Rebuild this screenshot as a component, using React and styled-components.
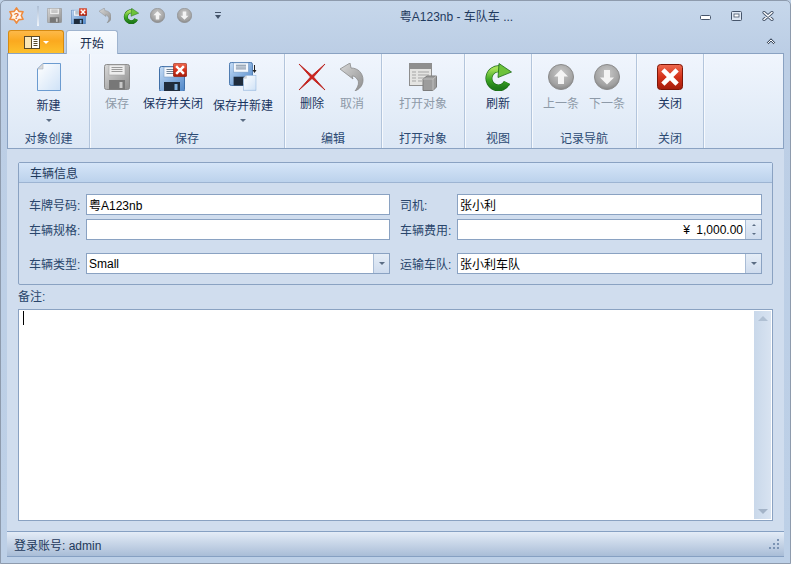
import React from 'react';
import styled, { createGlobalStyle } from 'styled-components';

const GlobalStyle = createGlobalStyle`
  html, body {
    margin: 0;
    padding: 0;
    background: #bfd1e6;
  }
  * {
    box-sizing: border-box;
  }
`;

const Window = styled.div`
  width: 791px;
  height: 564px;
  display: flex;
  flex-direction: column;
  overflow: hidden;
  background: linear-gradient(180deg, #c6d7eb 0%, #bccee5 50px, #bdd0e7 100%);
  border: 1px solid #8e9bad;
  border-radius: 5px 5px 0 0;
  color: #1e395b;
  font-family: "Liberation Sans", "Noto Sans CJK SC", sans-serif;
  font-size: 12px;
`;

const TitleBar = styled.div`
  height: 29px;
  flex: none;
  display: flex;
  align-items: center;
  padding: 0 16px 0 6px;
`;

const Qat = styled.div`
  display: flex;
  align-items: center;
`;

const QatSlot = styled.div`
  width: ${props => props.$w || 26}px;
  height: 18px;
  display: flex;
  align-items: center;
  justify-content: center;
`;

const QatSep = styled.div`
  width: 2px;
  height: 20px;
  margin: 0 3px 0 12px;
  background: linear-gradient(180deg, #aebfd5, #f0f5fb);
`;

const Title = styled.div`
  flex: 1;
  text-align: center;
  padding-right: 26px;
  font-size: 12px;
  color: #1f3a5e;
`;

const WinButtons = styled.div`
  display: flex;
  align-items: center;
  gap: 20px;
`;

const TabRow = styled.div`
  height: 23px;
  flex: none;
  display: flex;
  align-items: flex-end;
  padding: 0 14px 0 7px;
`;

const AppButton = styled.div`
  width: 56px;
  height: 23px;
  display: flex;
  align-items: center;
  justify-content: center;
  gap: 3px;
  background: linear-gradient(180deg, #fdb94a 0%, #fba91f 45%, #fdc02c 100%);
  border: 1px solid #d58a12;
  border-bottom: none;
  border-radius: 3px 3px 0 0;
`;

const Tab = styled.div`
  width: 52px;
  height: 24px;
  margin: 0 0 -1px 2px;
  position: relative;
  z-index: 1;
  display: flex;
  align-items: center;
  justify-content: center;
  background: linear-gradient(180deg, #f8fbfe, #eef4fc);
  border: 1px solid #9fb4cf;
  border-bottom: none;
  border-radius: 3px 3px 0 0;
  color: #15294a;
`;

const Collapse = styled.div`
  margin-left: auto;
  height: 23px;
  display: flex;
  align-items: center;
`;

const Ribbon = styled.div`
  height: 96px;
  flex: none;
  margin: 0 6px;
  display: flex;
  background: linear-gradient(180deg, #f0f5fd 0%, #e4edf8 60%, #dce7f5 100%);
  border: 1px solid #8aa2c2;
`;

const Group = styled.div`
  width: ${props => props.$w}px;
  flex: none;
  display: flex;
  flex-direction: column;
  border-right: 1px solid #b3c5dc;
  box-shadow: 1px 0 0 #f6f9fd;
`;

const GroupButtons = styled.div`
  flex: 1;
  display: flex;
  justify-content: ${props => props.$align || 'center'};
  padding-left: ${props => props.$pad || 0}px;
  gap: ${props => props.$gap || 0}px;
`;

const GroupLabel = styled.div`
  height: 21px;
  display: flex;
  align-items: center;
  justify-content: center;
  color: #2c4a73;
  font-size: 12px;
`;

const BigButton = styled.div`
  width: ${props => props.$w}px;
  flex: none;
  display: flex;
  flex-direction: column;
  align-items: center;
  padding-top: 8px;
  color: ${props => props.$off ? '#8e9aa8' : '#1a3560'};
  white-space: nowrap;
`;

const BigIcon = styled.div`
  height: 29px;
  display: flex;
  align-items: center;
  justify-content: center;
`;

const BigText = styled.div`
  margin-top: ${props => props.$drop ? 7 : 5}px;
  line-height: 16px;
`;

const DropMark = styled.div`
  margin-top: 5px;
  width: 0;
  height: 0;
  border: 3px solid transparent;
  border-top: 3px solid #5b6d84;
  border-bottom: none;
`;

const Body = styled.div`
  flex: 1;
  min-height: 0;
  margin: 0 6px;
  display: flex;
  flex-direction: column;
  padding: 13px 11px 10px 11px;
  background: #d0ddee;
`;

const GroupBox = styled.div`
  height: 123px;
  flex: none;
  border: 1px solid #8aa2c2;
  border-radius: 2px;
`;

const BoxHeader = styled.div`
  height: 20px;
  display: flex;
  align-items: center;
  padding-left: 11px;
  background: linear-gradient(180deg, #d5e5f8, #bcd2ec);
  border-bottom: 1px solid #9db4d2;
  color: #1e395b;
`;

const BoxBody = styled.div`
  padding: 11px 10px 0;
`;

const FieldRow = styled.div`
  display: grid;
  grid-template-columns: 57px 304px 10px 57px 305px;
  height: 21px;
  margin-top: ${props => props.$top || 0}px;
`;

const FieldLabel = styled.div`
  display: flex;
  align-items: center;
  white-space: nowrap;
  color: #29456b;
  grid-column: ${props => props.$col};
`;

const Input = styled.div`
  display: flex;
  align-items: stretch;
  grid-column: ${props => props.$col};
  background: #fff;
  border: 1px solid #8aa2c2;
  color: #000;
`;

const InputText = styled.div`
  flex: 1;
  display: flex;
  align-items: center;
  justify-content: ${props => props.$right ? 'flex-end' : 'flex-start'};
  padding: 0 2px;
  word-spacing: ${props => props.$right ? 3 : 0}px;
`;

const SideButton = styled.div`
  width: 16px;
  flex: none;
  display: flex;
  flex-direction: column;
  align-items: center;
  justify-content: center;
  gap: 7px;
  background: linear-gradient(180deg, #e5edf7, #cfdcee);
  border-left: 1px solid #a9bcd5;
`;

const Caret = styled.div`
  width: 0;
  height: 0;
  border: ${props => props.$size || 4}px solid transparent;
  ${props => props.$up
    ? `border-bottom: ${props.$size || 4}px solid ${props.$color || '#5b6d84'}; border-top: none;`
    : `border-top: ${props.$size || 4}px solid ${props.$color || '#5b6d84'}; border-bottom: none;`}
`;

const MemoLabel = styled.div`
  height: 20px;
  margin-bottom: 4px;
  display: flex;
  align-items: center;
  color: #29456b;
`;

const Memo = styled.div`
  flex: 1;
  min-height: 0;
  display: flex;
  background: #fff;
  border: 1px solid #8aa2c2;
`;

const MemoText = styled.div`
  flex: 1;
  padding: 1px 4px;
`;

const TextCursor = styled.div`
  width: 1px;
  height: 14px;
  background: #000;
`;

const ScrollBar = styled.div`
  width: 17px;
  flex: none;
  margin: 1px 1px 1px 0;
  display: flex;
  flex-direction: column;
  align-items: center;
  justify-content: space-between;
  padding: 5px 0;
  background: linear-gradient(90deg, #c9d8ea, #d8e3f1);
`;

const StatusBar = styled.div`
  height: 26px;
  flex: none;
  margin: 0 6px;
  display: flex;
  align-items: center;
  justify-content: space-between;
  padding: 0 4px 0 7px;
  background: linear-gradient(180deg, #e4ecf7 0%, #ccd9ea 40%, #a9bdd7 100%);
  border-top: 1px solid #86a0c2;
  border-bottom: 1px solid #86a0c2;
  color: #1e395b;
`;

const BottomFrame = styled.div`
  height: 6px;
  flex: none;
`;

const MinSvg = styled.svg`
  margin-top: 4px;
`;

// ---- icons ----

const Floppy = ({ size = 26, blue }) => {
  const id = blue ? 'fb' : 'fg';
  return (
    <svg width={size} height={size} viewBox="0 0 26 26">
      <defs>
        <linearGradient id={id} x1="0" y1="0" x2="1" y2="1">
          <stop offset="0" stopColor={blue ? '#c4dcf6' : '#d8d8d8'} />
          <stop offset="1" stopColor={blue ? '#4e86c8' : '#8e8e8e'} />
        </linearGradient>
      </defs>
      <rect x=".5" y=".5" width="25" height="25" rx="2" fill={`url(#${id})`} stroke={blue ? '#3f6fa8' : '#8b8b8b'} />
      <rect x="5" y="1" width="16" height="10" fill={blue ? '#f4f8fd' : '#ededed'} stroke={blue ? '#7a9cc4' : '#a5a5a5'} strokeWidth=".6" />
      <path d="M7.5 3.5h11M7.5 5.5h11M7.5 7.5h11" stroke={blue ? '#6f8296' : '#9a9a9a'} />
      <rect x="5" y="16" width="16" height="9.5" fill={blue ? '#1f2c3c' : '#777'} />
      <rect x="15.5" y="18" width="3" height="6" fill={blue ? '#7fb0e0' : '#c8c8c8'} />
    </svg>
  );
};

const RedX = ({ size = 26 }) => (
  <svg width={size} height={size} viewBox="0 0 26 26">
    <defs>
      <linearGradient id="rx" x1="0" y1="0" x2="0" y2="1">
        <stop offset="0" stopColor="#ef6a50" />
        <stop offset=".5" stopColor="#d5321a" />
        <stop offset="1" stopColor="#a31c0b" />
      </linearGradient>
    </defs>
    <rect x=".5" y=".5" width="25" height="25" rx="3" fill="url(#rx)" stroke="#7d1608" />
    <path d="M7.5 7.5l11 11M18.5 7.5l-11 11" stroke="#fff" strokeWidth="4.6" strokeLinecap="square" />
  </svg>
);

const FloppyClose = ({ size = 28 }) => (
  <svg width={size} height={size} viewBox="0 0 28 28">
    <g transform="translate(0 3)"><Floppy size={26} blue /></g>
    <g transform="translate(14 0) scale(.54)"><RedX /></g>
  </svg>
);

const NewDoc = ({ w = 24, h = 28 }) => (
  <svg width={w} height={h} viewBox="0 0 24 28">
    <defs>
      <linearGradient id="nd" x1="0" y1="0" x2="1" y2="1">
        <stop offset="0" stopColor="#ffffff" />
        <stop offset="1" stopColor="#cfe2f7" />
      </linearGradient>
    </defs>
    <path d="M6 .5H23.5V27.5H.5V6Z" fill="url(#nd)" stroke="#6b9bd0" />
    <path d="M6 .5V6H.5Z" fill="#d9d9d9" stroke="#a9b4c0" strokeWidth=".6" />
  </svg>
);

const FloppyNew = () => (
  <svg width="28" height="29" viewBox="0 0 28 29">
    <g transform="scale(.92)"><Floppy size={26} blue /></g>
    <g transform="translate(14 13) scale(.56)"><NewDoc /></g>
    <path d="M25.5 3v6" stroke="#222" strokeWidth="1" />
    <path d="M23.5 8h4l-2 3Z" fill="#222" />
  </svg>
);

const Undo = ({ size = 28, color = '#8f8f8f' }) => (
  <svg width={size * 24 / 28} height={size} viewBox="0 0 24 28">
    <defs>
      <linearGradient id="un" x1="0" y1="0" x2="1" y2="1">
        <stop offset="0" stopColor="#d8d8d8" />
        <stop offset="1" stopColor={color} />
      </linearGradient>
    </defs>
    <path d="M0 6 L10 0 L11 5 C18 5 23 10 23 17 C23 22 20 26 15 28 C18 24 20 19 17 16 C16 14 14 13 12 13 L13 16 Z" fill="url(#un)" stroke="#8a8a8a" strokeWidth=".8" />
  </svg>
);

const Refresh = ({ size = 28 }) => (
  <svg width={size} height={size} viewBox="0 0 28 28">
    <defs>
      <linearGradient id="rf" x1="0" y1="0" x2="0" y2="1">
        <stop offset="0" stopColor="#a5e05a" />
        <stop offset=".55" stopColor="#3fa824" />
        <stop offset="1" stopColor="#1e7a18" />
      </linearGradient>
    </defs>
    <path d="M23 19.500 A9.500 9.500 0 1 1 16 6" fill="none" stroke="#1c6a16" strokeWidth="7" />
    <path d="M23 19.500 A9.500 9.500 0 1 1 16 6" fill="none" stroke="url(#rf)" strokeWidth="5.600" />
    <path d="M15 0.500 L27.500 9 L14 14.500 Z" fill="#6cc23a" stroke="#1c6a16" strokeWidth=".8" />
  </svg>
);

const CircleArrow = ({ size = 26, down }) => {
  const id = down ? 'cd' : 'cu';
  return (
    <svg width={size} height={size} viewBox="0 0 26 26">
      <defs>
        <radialGradient id={id} cx=".5" cy=".35" r=".7">
          <stop offset="0" stopColor="#c9c9c9" />
          <stop offset=".7" stopColor="#a2a2a2" />
          <stop offset="1" stopColor="#7e7e7e" />
        </radialGradient>
      </defs>
      <circle cx="13" cy="13" r="12.500" fill={`url(#${id})`} stroke="#8a8a8a" />
      <path
        d="M13 5.500 L20 12.500 H16 V20 H10 V12.500 H6 Z"
        fill="#f4f4f4"
        transform={down ? 'rotate(180 13 13)' : undefined}
      />
    </svg>
  );
};

const BigCross = () => (
  <svg width="28" height="28" viewBox="0 0 28 28">
    <path d="M1 1 L14 12.500 L27 1 L15.500 14 L27 27 L14 15.500 L1 27 L12.500 14 Z" fill="#d2221c" stroke="#b51a15" strokeWidth=".8" />
  </svg>
);

const OpenObject = () => (
  <svg width="28" height="28" viewBox="0 0 28 28">
    <rect x=".5" y=".5" width="22" height="22" fill="#e4e4e2" stroke="#8e8e8e" />
    <rect x="1" y="1" width="21" height="5" fill="#8f8f8f" />
    <path d="M3 9h4M3 12h4M3 15h4M3 18h4" stroke="#a5a5a5" />
    <path d="M9 9h11M9 12h11M9 15h6M9 18h4" stroke="#a5a5a5" />
    <path d="M14 16 L18 13 H27.500 V24 L24 27.500 H14 Z" fill="#9c9c9c" stroke="#7c7c7c" />
    <path d="M14 16 H24 L27.500 13 M24 16 V27.500" fill="none" stroke="#c8c8c8" strokeWidth=".8" />
  </svg>
);

const AppIcon = () => (
  <svg width="17" height="17" viewBox="-1 -1 18 18">
    <path
      d="M8 0 L10.500 3.670 L14.930 4 L13 8 L14.930 12 L10.500 12.330 L8 16 L5.500 12.330 L1.070 12 L3 8 L1.070 4 L5.500 3.670 Z"
      fill="#fff6ec"
      stroke="#ee8a3c"
      strokeWidth="1.700"
      strokeLinejoin="round"
    />
    <text x="8" y="11.500" textAnchor="middle" fontSize="9.500" fontWeight="bold" fill="#e0702a" fontFamily="Liberation Sans">?</text>
  </svg>
);

const BookIcon = () => (
  <svg width="16" height="13" viewBox="0 0 16 13">
    <rect x=".5" y=".5" width="15" height="12" fill="#fff" stroke="#5a4a2a" />
    <rect x="1" y="1" width="6" height="11" fill="#fbe6b4" />
    <path d="M7.500 1v11" stroke="#5a4a2a" />
    <path d="M9.500 3.500h4M9.500 5.500h4M9.500 7.500h4M9.500 9.500h4" stroke="#5a4a2a" />
  </svg>
);

const QatDrop = () => (
  <svg width="8" height="9" viewBox="0 0 8 9">
    <path d="M1 1.500h6" stroke="#44546a" />
    <path d="M1 4h6L4 8Z" fill="#44546a" />
  </svg>
);

const WinMin = () => (
  <MinSvg width="11" height="5" viewBox="0 0 11 5">
    <rect x=".5" y=".5" width="10" height="4" rx="1" fill="#fff" stroke="#46556b" />
  </MinSvg>
);

const WinMax = () => (
  <svg width="11" height="10" viewBox="0 0 11 10">
    <rect x=".5" y=".5" width="10" height="9" rx="1" fill="#dfe8f4" stroke="#46556b" />
    <rect x="3" y="3" width="5" height="3" fill="#fff" stroke="#46556b" strokeWidth=".8" />
  </svg>
);

const WinClose = () => (
  <svg width="12" height="10" viewBox="0 0 12 10">
    <path d="M2 1.500l8 7M10 1.500l-8 7" stroke="#46556b" strokeWidth="3.200" strokeLinecap="round" />
    <path d="M2 1.500l8 7M10 1.500l-8 7" stroke="#fff" strokeWidth="1.500" strokeLinecap="round" />
  </svg>
);

const CollapseIcon = () => (
  <svg width="10" height="7" viewBox="0 0 10 7">
    <path d="M1.500 5.500L5 2l3.500 3.500" fill="none" stroke="#3c4a5e" strokeWidth="2.400" />
    <path d="M1.500 5.500L5 2l3.500 3.500" fill="none" stroke="#fff" strokeWidth="1" />
  </svg>
);

const Grip = () => (
  <svg width="12" height="12" viewBox="0 0 12 12" fill="#7b93b3">
    <rect x="9" y="1" width="2" height="2" />
    <rect x="5" y="5" width="2" height="2" />
    <rect x="9" y="5" width="2" height="2" />
    <rect x="1" y="9" width="2" height="2" />
    <rect x="5" y="9" width="2" height="2" />
    <rect x="9" y="9" width="2" height="2" />
  </svg>
);

const App = () => (
  <>
    <GlobalStyle />
    <Window>
      <TitleBar>
        <Qat>
          <QatSlot $w={18}><AppIcon /></QatSlot>
          <QatSep />
          <QatSlot $w={24}><Floppy size={15} /></QatSlot>
          <QatSlot><FloppyClose size={16} /></QatSlot>
          <QatSlot $w={26}><Undo size={15} /></QatSlot>
          <QatSlot><Refresh size={16} /></QatSlot>
          <QatSlot $w={27}><CircleArrow size={15} /></QatSlot>
          <QatSlot><CircleArrow size={15} down /></QatSlot>
          <QatSlot $w={42}><QatDrop /></QatSlot>
        </Qat>
        <Title>粤A123nb - 车队车 ...</Title>
        <WinButtons>
          <WinMin />
          <WinMax />
          <WinClose />
        </WinButtons>
      </TitleBar>

      <TabRow>
        <AppButton>
          <BookIcon />
          <Caret $size={3} $color="#fff" />
        </AppButton>
        <Tab>开始</Tab>
        <Collapse><CollapseIcon /></Collapse>
      </TabRow>

      <Ribbon>
        <Group $w={82}>
          <GroupButtons>
            <BigButton $w={60}>
              <BigIcon><NewDoc /></BigIcon>
              <BigText $drop>新建</BigText>
              <DropMark />
            </BigButton>
          </GroupButtons>
          <GroupLabel>对象创建</GroupLabel>
        </Group>
        <Group $w={195}>
          <GroupButtons $align="flex-start" $pad={8}>
            <BigButton $w={38} $off>
              <BigIcon><Floppy /></BigIcon>
              <BigText>保存</BigText>
            </BigButton>
            <BigButton $w={74}>
              <BigIcon><FloppyClose /></BigIcon>
              <BigText>保存并关闭</BigText>
            </BigButton>
            <BigButton $w={66}>
              <BigIcon><FloppyNew /></BigIcon>
              <BigText $drop>保存并新建</BigText>
              <DropMark />
            </BigButton>
          </GroupButtons>
          <GroupLabel>保存</GroupLabel>
        </Group>
        <Group $w={97}>
          <GroupButtons $align="flex-start" $pad={7}>
            <BigButton $w={40}>
              <BigIcon><BigCross /></BigIcon>
              <BigText>删除</BigText>
            </BigButton>
            <BigButton $w={40} $off>
              <BigIcon><Undo /></BigIcon>
              <BigText>取消</BigText>
            </BigButton>
          </GroupButtons>
          <GroupLabel>编辑</GroupLabel>
        </Group>
        <Group $w={83}>
          <GroupButtons>
            <BigButton $w={60} $off>
              <BigIcon><OpenObject /></BigIcon>
              <BigText>打开对象</BigText>
            </BigButton>
          </GroupButtons>
          <GroupLabel>打开对象</GroupLabel>
        </Group>
        <Group $w={67}>
          <GroupButtons>
            <BigButton $w={40}>
              <BigIcon><Refresh /></BigIcon>
              <BigText>刷新</BigText>
            </BigButton>
          </GroupButtons>
          <GroupLabel>视图</GroupLabel>
        </Group>
        <Group $w={105}>
          <GroupButtons $gap={6}>
            <BigButton $w={40} $off>
              <BigIcon><CircleArrow /></BigIcon>
              <BigText>上一条</BigText>
            </BigButton>
            <BigButton $w={40} $off>
              <BigIcon><CircleArrow down /></BigIcon>
              <BigText>下一条</BigText>
            </BigButton>
          </GroupButtons>
          <GroupLabel>记录导航</GroupLabel>
        </Group>
        <Group $w={67}>
          <GroupButtons>
            <BigButton $w={40}>
              <BigIcon><RedX /></BigIcon>
              <BigText>关闭</BigText>
            </BigButton>
          </GroupButtons>
          <GroupLabel>关闭</GroupLabel>
        </Group>
      </Ribbon>

      <Body>
        <GroupBox>
          <BoxHeader>车辆信息</BoxHeader>
          <BoxBody>
            <FieldRow>
              <FieldLabel $col={1}>车牌号码:</FieldLabel>
              <Input $col={2}><InputText>粤A123nb</InputText></Input>
              <FieldLabel $col={4}>司机:</FieldLabel>
              <Input $col={5}><InputText>张小利</InputText></Input>
            </FieldRow>
            <FieldRow $top={4}>
              <FieldLabel $col={1}>车辆规格:</FieldLabel>
              <Input $col={2}><InputText /></Input>
              <FieldLabel $col={4}>车辆费用:</FieldLabel>
              <Input $col={5}>
                <InputText $right>¥ 1,000.00</InputText>
                <SideButton>
                  <Caret $size={2} $up />
                  <Caret $size={2} />
                </SideButton>
              </Input>
            </FieldRow>
            <FieldRow $top={13}>
              <FieldLabel $col={1}>车辆类型:</FieldLabel>
              <Input $col={2}>
                <InputText>Small</InputText>
                <SideButton><Caret $size={3.5} /></SideButton>
              </Input>
              <FieldLabel $col={4}>运输车队:</FieldLabel>
              <Input $col={5}>
                <InputText>张小利车队</InputText>
                <SideButton><Caret $size={3.5} /></SideButton>
              </Input>
            </FieldRow>
          </BoxBody>
        </GroupBox>
        <MemoLabel>备注:</MemoLabel>
        <Memo>
          <MemoText><TextCursor /></MemoText>
          <ScrollBar>
            <Caret $size={5} $up $color="#b0c0d3" />
            <Caret $size={5} $color="#a3b3c7" />
          </ScrollBar>
        </Memo>
      </Body>

      <StatusBar>
        <span>登录账号: admin</span>
        <Grip />
      </StatusBar>
      <BottomFrame />
    </Window>
  </>
);

export default App;
